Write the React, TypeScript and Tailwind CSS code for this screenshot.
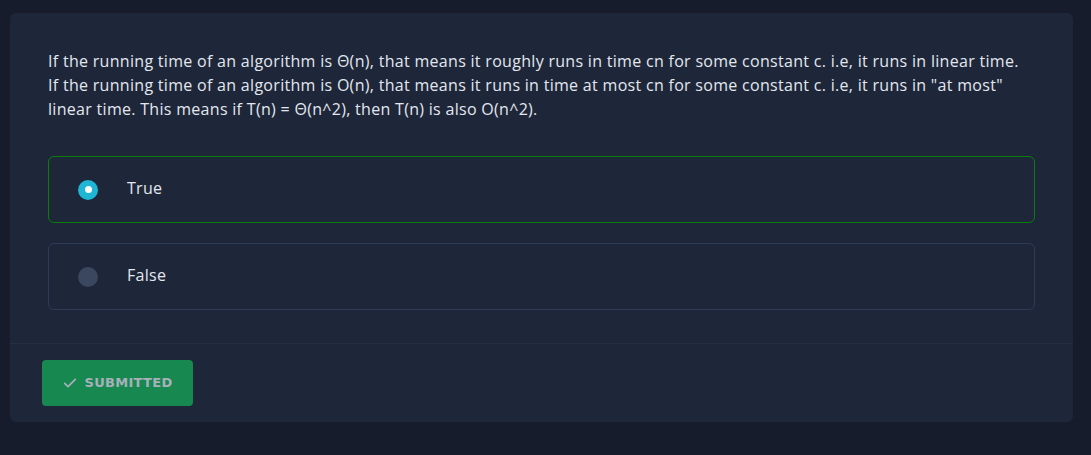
import React, { useState } from 'react';

const options = ['True', 'False'];

export default function App() {
  const [selected] = useState(0);

  return (
    <div className="min-h-screen w-full bg-[#161c2b] pt-[13px] pl-[10px] pr-[18px] font-['Open_Sans',sans-serif]">
      <div className="rounded-md bg-[#1e263a]">
        <div className="px-[38px] pt-[36px] pb-[33px]">
          <p className="text-[16px] leading-[24px] tracking-[0.3px] text-[#e3e7ee]">
            If the running time of an algorithm is Θ(n), that means it roughly runs in time cn for some constant c. i.e, it runs in linear time.
            <br />
            If the running time of an algorithm is O(n), that means it runs in time at most cn for some constant c. i.e, it runs in "at most"
            <br />
            linear time. This means if T(n) = Θ(n^2), then T(n) is also O(n^2).
          </p>

          <div className="mt-[35px] flex flex-col gap-[20px]">
            {options.map((opt, i) => (
              <div
                key={opt}
                className={`flex h-[67px] items-center rounded-md border px-[29px] ${
                  i === selected ? 'border-[#0b7d0b]' : 'border-[#2e3a58]'
                }`}
              >
                {i === selected ? (
                  <span className="flex h-[20px] w-[20px] items-center justify-center rounded-full bg-[#1fb5d5]">
                    <span className="h-[7px] w-[7px] rounded-full bg-white" />
                  </span>
                ) : (
                  <span className="h-[20px] w-[20px] rounded-full bg-[#3b465f]" />
                )}
                <span className="ml-[29px] -mt-[4px] text-[16px] tracking-[0.3px] text-[#e3e7ee]">{opt}</span>
              </div>
            ))}
          </div>
        </div>

        <div className="border-t border-[#252e44] px-[32px] py-[16px]">
          <button className="flex h-[46px] w-[151px] items-center justify-center gap-[6px] rounded bg-[#17884f] text-[13px] font-bold uppercase tracking-[0.3px] text-[#a8b1bb] font-['DejaVu_Sans',sans-serif]">
            <svg width="16" height="16" viewBox="0 0 24 24" fill="none" stroke="currentColor" strokeWidth="2.5" strokeLinecap="round" strokeLinejoin="round">
              <path d="M4 12.5l5 5L20 6.5" />
            </svg>
            Submitted
          </button>
        </div>
      </div>
    </div>
  );
}
